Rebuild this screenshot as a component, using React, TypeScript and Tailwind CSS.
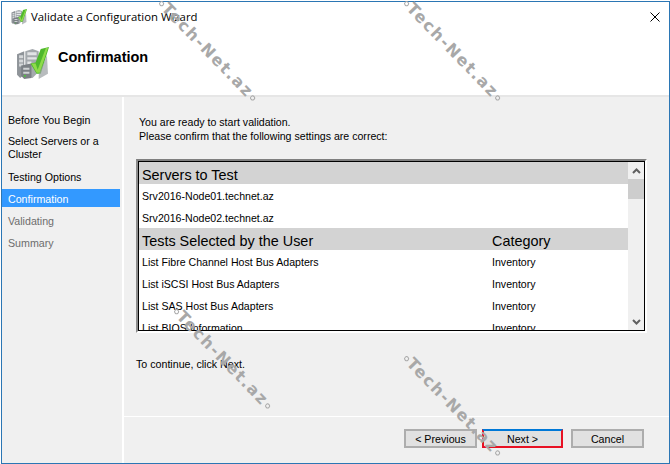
import React from "react";

const ServerIcon = ({ size }: { size: number }) => (
  <svg width={size} height={size} viewBox="0 0 32 32">
    <path d="M1 7 L8 4 L8 27 L4 30 L1 27 Z" fill="#8f9499" />
    <path d="M3 8h4v3H3zM3 12h4v3H3zM3 16h4v3H3z" fill="#d5d8da" />
    <path d="M9 4 L16 2 L22 4 L22 24 L16 30 L9 28 Z" fill="#a4a9ad" />
    <path d="M11 5h9v3h-9zM11 10h9v2h-9zM11 14h4v3h-4z" fill="#e2e4e6" />
    <path d="M5 18 L15 16 L15 30 L8 31 L5 28 Z" fill="#7b8085" />
    <path d="M7 20h6v2H7zM7 24h6v2H7z" fill="#cfd2d4" />
    <circle cx="8.5" cy="28" r="1" fill="#4fc23a" />
    <path d="M14 16 L19 15 L24 2 L32 0 L24 26 L20 26 Z" fill="#4fb82d" />
    <path d="M15 16 L19 16 L21 22 L29 1 L31 1 L23 25 L20 25 Z" fill="#8edb4a" />
    <path d="M22 27 L30 8 L31 26 L22 31 Z" fill="#9a9fa3" opacity="0.7" />
  </svg>
);

const Mark = ({ x, y }: { x: number; y: number }) => (
  <div className="pointer-events-none absolute z-10" style={{ left: x, top: y }}>
    <div className="flex origin-top-left rotate-[46deg] items-center font-['DejaVu_Sans'] text-[16px] font-bold leading-none tracking-[1.7px] text-[#a8a8a8] whitespace-nowrap">
      <span className="mr-px inline-block h-[5px] w-[5px] rounded-full border border-[#a8a8a8]" />
      Tech-Net.az
      <span className="ml-px inline-block h-[5px] w-[5px] rounded-full border border-[#a8a8a8]" />
    </div>
  </div>
);

const Row = ({ a, b }: { a: string; b?: string }) => (
  <div className="flex h-[22px] shrink-0 items-center bg-white pl-[3px] pt-[3px] text-[10.6px]">
    <span className="w-[350px]">{a}</span>
    {b && <span>{b}</span>}
  </div>
);
const Head = ({ a, b }: { a: string; b?: string }) => (
  <div className="flex h-[22px] shrink-0 items-center bg-[#d3d3d3] pl-[3px] pt-[6px] text-[14.4px]">
    <span className="w-[350px]">{a}</span>
    {b && <span>{b}</span>}
  </div>
);

const Btn = ({ children, cls }: { children: React.ReactNode; cls: string }) => (
  <button className={`flex h-[19px] items-center justify-center bg-[#e1e1e1] text-[10.67px] text-black ${cls}`}>{children}</button>
);

export default function App() {
  return (
    <div className="h-[464px] w-[670px] overflow-hidden bg-white pl-px pt-px font-['Liberation_Sans',sans-serif] text-black relative">
      <div className="flex h-[463px] w-[669px] flex-col border border-[#2b76b4]">
        <div className="flex h-[93px] shrink-0 flex-col bg-white">
          <div className="flex h-[30px] items-center pl-[9px]">
            <ServerIcon size={16} />
            <span className="ml-[4px] font-['Open_Sans'] text-[11.35px]">Validate a Configuration Wizard</span>
            <svg className="ml-auto mr-[9px]" width="10" height="10" viewBox="0 0 10 10">
              <path d="M0.5 0.5 L9.5 9.5 M9.5 0.5 L0.5 9.5" stroke="#000" strokeWidth="1" />
            </svg>
          </div>
          <div className="flex items-start pl-[14px] pt-[15px]">
            <ServerIcon size={33} />
            <span className="ml-[9px] text-[14.5px] font-bold">Confirmation</span>
          </div>
        </div>
        <div className="h-[2px] shrink-0 bg-[#e6e6e6]" />
        <div className="flex min-h-0 flex-1">
          <div className="flex w-[120px] shrink-0 flex-col bg-[#f0f0f0] pt-[12px] text-[10.67px]">
            <div className="flex h-[22px] items-center pl-[6px]">Before You Begin</div>
            <div className="mt-[4px] flex h-[26px] items-center pl-[6px] leading-[13px]">Select Servers or a<br />Cluster</div>
            <div className="mt-[5px] flex h-[22px] items-center pl-[6px]">Testing Options</div>
            <div className="mt-[1px] flex h-[18px] w-[118px] items-center bg-[#3399ff] pl-[6px] pt-[2px] text-white">Confirmation</div>
            <div className="mt-[3px] flex h-[22px] items-center pl-[6px] text-[#6d6d6d]">Validating</div>
            <div className="flex h-[22px] items-center pl-[6px] text-[#6d6d6d]">Summary</div>
          </div>
          <div className="w-[2px] shrink-0 bg-white" />
          <div className="flex min-w-0 flex-1 flex-col bg-[#f0f0f0]">
            <div className="h-[319px] shrink-0 px-[12px] pt-[18px]">
              <div className="pl-[3px] text-[10.6px] leading-[14px]">
                You are ready to start validation.<br />Please confirm that the following settings are correct:
              </div>
              <div className="mt-[16px] h-[174px] w-[511px] border-2 border-b-white border-l-[#8c8c8c] border-r-white border-t-[#7f7f7f]">
                <div className="flex h-full w-full border border-black bg-white">
                  <div className="flex min-w-0 flex-1 flex-col overflow-hidden">
                    <Head a="Servers to Test" />
                    <Row a="Srv2016-Node01.technet.az" />
                    <Row a="Srv2016-Node02.technet.az" />
                    <Head a="Tests Selected by the User" b="Category" />
                    <Row a="List Fibre Channel Host Bus Adapters" b="Inventory" />
                    <Row a="List iSCSI Host Bus Adapters" b="Inventory" />
                    <Row a="List SAS Host Bus Adapters" b="Inventory" />
                    <Row a="List BIOS Information" b="Inventory" />
                  </div>
                  <div className="flex w-[16px] shrink-0 flex-col bg-[#f0f0f0]">
                    <div className="flex h-[17px] items-center justify-center">
                      <svg width="9" height="6" viewBox="0 0 9 6"><path d="M1 5 L4.5 1.5 L8 5" fill="none" stroke="#606060" strokeWidth="2" /></svg>
                    </div>
                    <div className="h-[20px] bg-[#cdcdcd]" />
                    <div className="flex-1" />
                    <div className="flex h-[17px] items-center justify-center">
                      <svg width="9" height="6" viewBox="0 0 9 6"><path d="M1 1 L4.5 4.5 L8 1" fill="none" stroke="#606060" strokeWidth="2" /></svg>
                    </div>
                  </div>
                </div>
              </div>
              <div className="mt-[24px] text-[10.67px] leading-[14px]">To continue, click Next.</div>
            </div>
            <div className="h-px shrink-0 bg-white" />
            <div className="flex flex-1 items-start pl-[280px] pt-[12px]">
              <Btn cls="w-[73px] border-2 border-[#adadad]">&lt; Previous</Btn>
              <Btn cls="ml-[5px] w-[81px] border-2 border-[#e81123] border-t-[#0078d7]">Next &gt;</Btn>
              <Btn cls="ml-[8px] w-[73px] border-2 border-[#adadad]">Cancel</Btn>
            </div>
          </div>
        </div>
      </div>
      <Mark x={166} y={-4} />
      <Mark x={411} y={-4} />
      <Mark x={181} y={304} />
      <Mark x={411} y={351} />
    </div>
  );
}
